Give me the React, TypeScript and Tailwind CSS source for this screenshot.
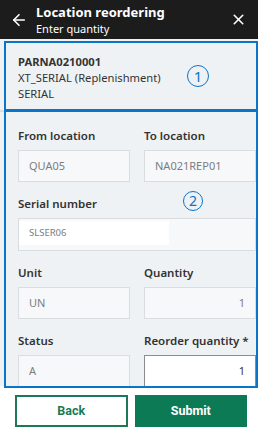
import { ArrowLeft, X } from "lucide-react"

function Field({ label, value, align = "left", active = false, wide = false, small = false }: { label: string; value: string; align?: "left" | "right"; active?: boolean; wide?: boolean; small?: boolean }) {
  return (
    <div className={wide ? "col-span-2" : ""}>
      <div className="text-[11.5px] leading-[16px] font-semibold text-[#333]">{label}</div>
      <div
        className={`mt-[6px] flex border ${small ? "h-[33px]" : "h-[32px]"} ${
          active ? "border-[#8c8c8c] bg-white text-[#333]" : "border-[#d9dde0] bg-[#f7f8f9] text-[#7d7d7d]"
        } ${align === "right" ? "justify-end pr-[10px] items-center" : small ? "items-stretch pt-[2px] pb-[5px]" : "pl-[10px] items-center"}`}
      >
        {small ? (
          <span className="w-[150px] bg-white flex items-center pl-[10px] text-[9.5px]">{value}</span>
        ) : (
          <span className="text-[11px]">{value}</span>
        )}
      </div>
    </div>
  )
}

export default function App() {
  return (
    <div className="relative w-[262px] h-[431px] bg-white overflow-hidden" style={{ fontFamily: "'Noto Sans', 'Open Sans', sans-serif" }}>
      <div className="w-[258px] h-[39px] bg-[#1c1c1c] flex items-center pl-[10px] pr-[11px] text-white">
        <ArrowLeft size={18} strokeWidth={2.2} />
        <div className="ml-[8px] mt-[1px] flex-1 flex flex-col">
          <span className="text-[13px] leading-[17px] font-bold">Location reordering</span>
          <span className="text-[11px] leading-[15px]">Enter quantity</span>
        </div>
        <X size={17} strokeWidth={2.2} />
      </div>

      <div className="w-[258px] bg-[#eff2f4]">
        <div className="h-[73px] pt-[15px] px-[18px] text-[11.2px] leading-[16px] text-[#333] border-b-2 border-[#d8dcdf]">
          <div className="font-bold">PARNA0210001</div>
          <div>XT_SERIAL (Replenishment)</div>
          <div>SERIAL</div>
        </div>
        <div className="h-[274px] overflow-hidden pt-[16px] pl-[18px] pr-[2px]">
          <div className="grid grid-cols-2 gap-x-[14px] gap-y-[14px]">
            <Field label="From location" value="QUA05" />
            <Field label="To location" value="NA021REP01" />
            <Field label="Serial number" value="SLSER06" wide small />
            <Field label="Unit" value="UN" />
            <Field label="Quantity" value="1" align="right" />
            <Field label="Status" value="A" />
            <Field label="Reorder quantity *" value="1" align="right" active />
          </div>
        </div>
      </div>

      <div className="flex gap-[7px] px-[15px] pt-[9px]" style={{ fontFamily: "Roboto, 'Noto Sans', sans-serif" }}>
        <button className="w-[113px] h-[32px] border-2 border-[#1b7a55] bg-white text-[#1b7a55] text-[12.5px] font-bold">Back</button>
        <button className="w-[113px] h-[32px] bg-[#0b7a55] text-white text-[12.5px] font-bold">Submit</button>
      </div>

      {/* annotation overlay */}
      <div className="absolute left-[4px] top-[41px] w-[254px] h-[70px] border-2 border-[#0a74c9] pointer-events-none" />
      <div className="absolute left-[4px] top-[110px] w-[254px] h-[278px] border-2 border-[#0a74c9] pointer-events-none" />
      <div className="absolute left-[187px] top-[65px] w-[22px] h-[22px] rounded-full border-[1.5px] border-[#0a74c9] text-[#0a74c9] text-[15px] leading-none flex items-center justify-center">1</div>
      <div className="absolute left-[183px] top-[191px] w-[20px] h-[20px] rounded-full border-[1.5px] border-[#0a74c9] text-[#0a74c9] text-[14px] leading-none flex items-center justify-center">2</div>
    </div>
  )
}
